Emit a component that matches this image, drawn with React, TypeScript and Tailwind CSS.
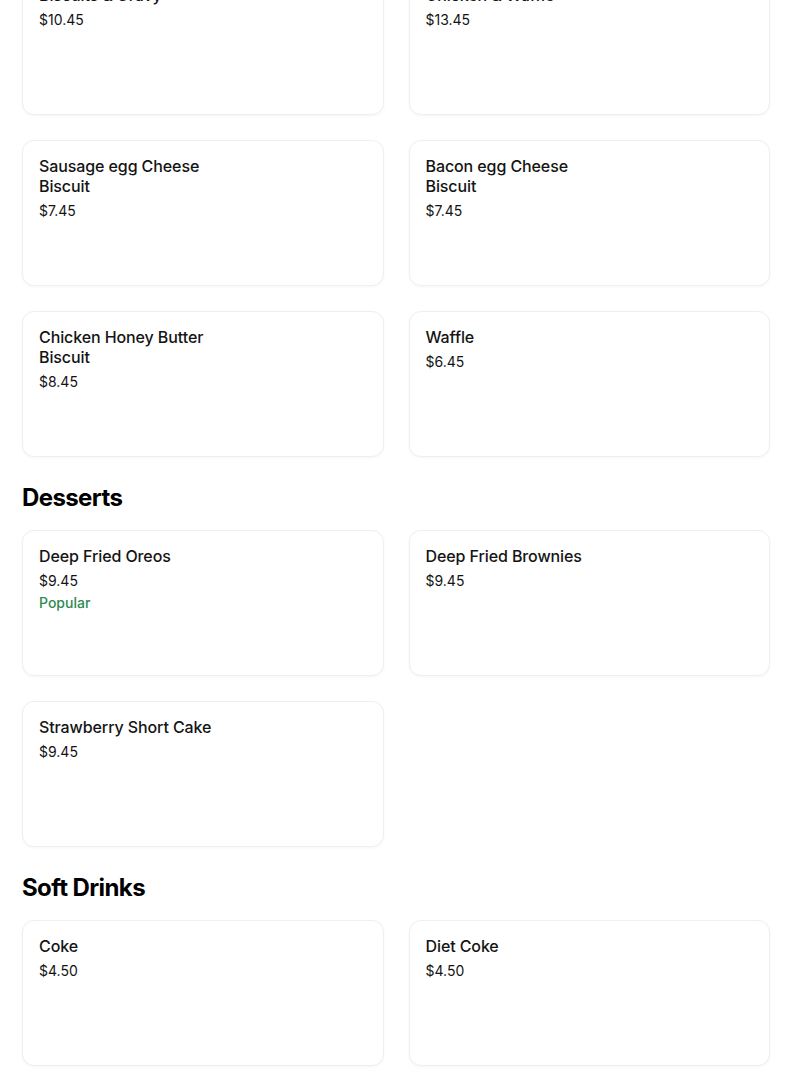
import React from "react";

interface MenuItem {
  name: string;
  price: string;
  popular?: boolean;
}

interface Section {
  title?: string;
  items: MenuItem[];
}

const sections: Section[] = [
  {
    items: [
      { name: "Biscuits & Gravy", price: "$10.45" },
      { name: "Chicken & Waffle", price: "$13.45" },
      { name: "Sausage egg Cheese Biscuit", price: "$7.45" },
      { name: "Bacon egg Cheese Biscuit", price: "$7.45" },
      { name: "Chicken Honey Butter Biscuit", price: "$8.45" },
      { name: "Waffle", price: "$6.45" },
    ],
  },
  {
    title: "Desserts",
    items: [
      { name: "Deep Fried Oreos", price: "$9.45", popular: true },
      { name: "Deep Fried Brownies", price: "$9.45" },
      { name: "Strawberry Short Cake", price: "$9.45" },
    ],
  },
  {
    title: "Soft Drinks",
    items: [
      { name: "Coke", price: "$4.50" },
      { name: "Diet Coke", price: "$4.50" },
      { name: "Sprite", price: "$4.50" },
      { name: "Dr Pepper", price: "$4.50" },
    ],
  },
];

function ItemCard({ item }: { item: MenuItem }) {
  return (
    <div className="h-[146px] rounded-xl border border-[#efefef] bg-white px-4 pt-[15px] shadow-[0_1px_3px_rgba(0,0,0,0.04)]">
      <p className="w-[185px] text-[16px] leading-5 font-medium tracking-[-0.1px] text-[#141414]">{item.name}</p>
      <p className="mt-[5px] text-[14px] leading-5 text-[#141414]">{item.price}</p>
      {item.popular && (
        <p className="mt-[2px] text-[14px] leading-5 font-medium text-[#2f8a4f]">Popular</p>
      )}
    </div>
  );
}

export default function App() {
  return (
    <div
      className="min-h-screen overflow-hidden bg-white"
      style={{ fontFamily: "Inter, 'Noto Sans', sans-serif" }}
    >
      <div className="-mt-[31px] pl-[22px] pr-[34px]">
        {sections.map((section, i) => (
          <div key={i} className={i > 0 ? "mt-[25px]" : ""}>
            {section.title && (
              <h2 className="mb-4 text-[24px] leading-[32px] font-bold tracking-[-0.6px] text-black">
                {section.title}
              </h2>
            )}
            <div className="grid grid-cols-2 gap-x-[25px] gap-y-[25px]">
              {section.items.map((item) => (
                <ItemCard key={item.name} item={item} />
              ))}
            </div>
          </div>
        ))}
      </div>
    </div>
  );
}
